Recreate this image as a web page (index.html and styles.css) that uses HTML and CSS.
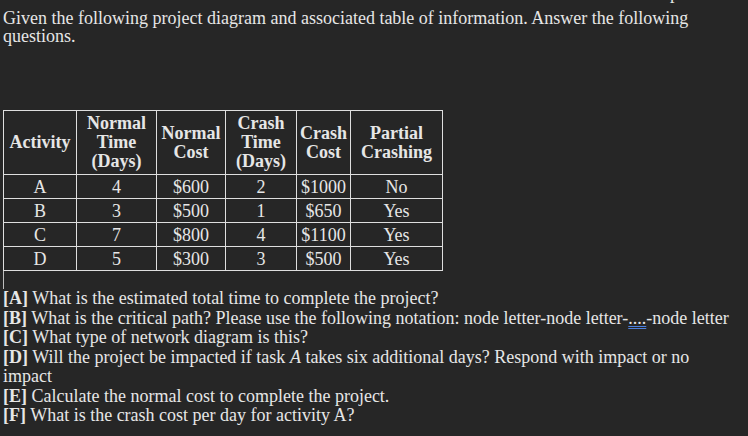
FILE: index.html
```html
<!DOCTYPE html>
<html>
<head>
<meta charset="utf-8">
<link rel="stylesheet" href="styles.css">
</head>
<body>
<div class="page">
  <div class="ghost">p</div>
  <p class="intro">Given the following project diagram and associated table of information. Answer the following questions.</p>
  <table class="data">
    <colgroup>
      <col class="c1"><col class="c2"><col class="c3"><col class="c4"><col class="c5"><col class="c6">
    </colgroup>
    <thead>
      <tr>
        <th>Activity</th>
        <th>Normal<br>Time<br>(Days)</th>
        <th>Normal<br>Cost</th>
        <th>Crash<br>Time<br>(Days)</th>
        <th>Crash<br>Cost</th>
        <th>Partial<br>Crashing</th>
      </tr>
    </thead>
    <tbody>
      <tr><td>A</td><td>4</td><td>$600</td><td>2</td><td>$1000</td><td>No</td></tr>
      <tr><td>B</td><td>3</td><td>$500</td><td>1</td><td>$650</td><td>Yes</td></tr>
      <tr><td>C</td><td>7</td><td>$800</td><td>4</td><td>$1100</td><td>Yes</td></tr>
      <tr><td>D</td><td>5</td><td>$300</td><td>3</td><td>$500</td><td>Yes</td></tr>
    </tbody>
  </table>
  <div class="caret"></div>
  <div class="questions">
    <p><b>[A]</b> What is the estimated total time to complete the project?</p>
    <p class="nowrap"><b>[B]</b> What is the critical path? Please use the following notation: node letter-node letter-<span class="dots">....</span>-node letter</p>
    <p><b>[C]</b> What type of network diagram is this?</p>
    <p><b>[D]</b> Will the project be impacted if task <i>A</i> takes six additional days? Respond with impact or no impact</p>
    <p><b>[E]</b> Calculate the normal cost to complete the project.</p>
    <p><b>[F]</b> What is the crash cost per day for activity A?</p>
  </div>
</div>
</body>
</html>
```

FILE: styles.css
```css
html, body {
  margin: 0;
  padding: 0;
  background: #262626;
}

body {
  width: 748px;
  height: 436px;
  overflow: hidden;
  color: #e6e6e6;
  font-family: "Liberation Serif", "Times New Roman", serif;
  font-size: 18px;
}

.page {
  padding-left: 3px;
}

.ghost {
  margin-top: -17px;
  margin-bottom: 7px;
  padding-left: 667px;
  line-height: 20px;
}

.intro {
  margin: 0;
  line-height: 17.5px;
  width: 740px;
}

.data {
  margin-top: 65px;
  border-collapse: collapse;
  table-layout: fixed;
  width: 439px;
}

.c1 { width: 73px; }
.c2 { width: 80px; }
.c3 { width: 69px; }
.c4 { width: 71px; }
.c5 { width: 54px; }
.c6 { width: 92px; }

.data th,
.data td {
  border: 1px solid #dedede;
  padding: 0;
  text-align: center;
  vertical-align: middle;
  white-space: nowrap;
}

.data th {
  height: 63px;
  line-height: 19px;
  font-weight: bold;
}

.data td {
  height: 23px;
  line-height: 20px;
}

.caret {
  height: 18px;
  width: 0;
  border-left: 1px solid #bdbdbd;
}

.questions {
  width: 720px;
}

.questions p {
  margin: 0;
  line-height: 19.5px;
}

.questions .nowrap {
  white-space: nowrap;
}

.dots {
  text-decoration: underline double #4d7fdc;
  text-decoration-thickness: 1px;
  text-underline-offset: 2px;
}
```
